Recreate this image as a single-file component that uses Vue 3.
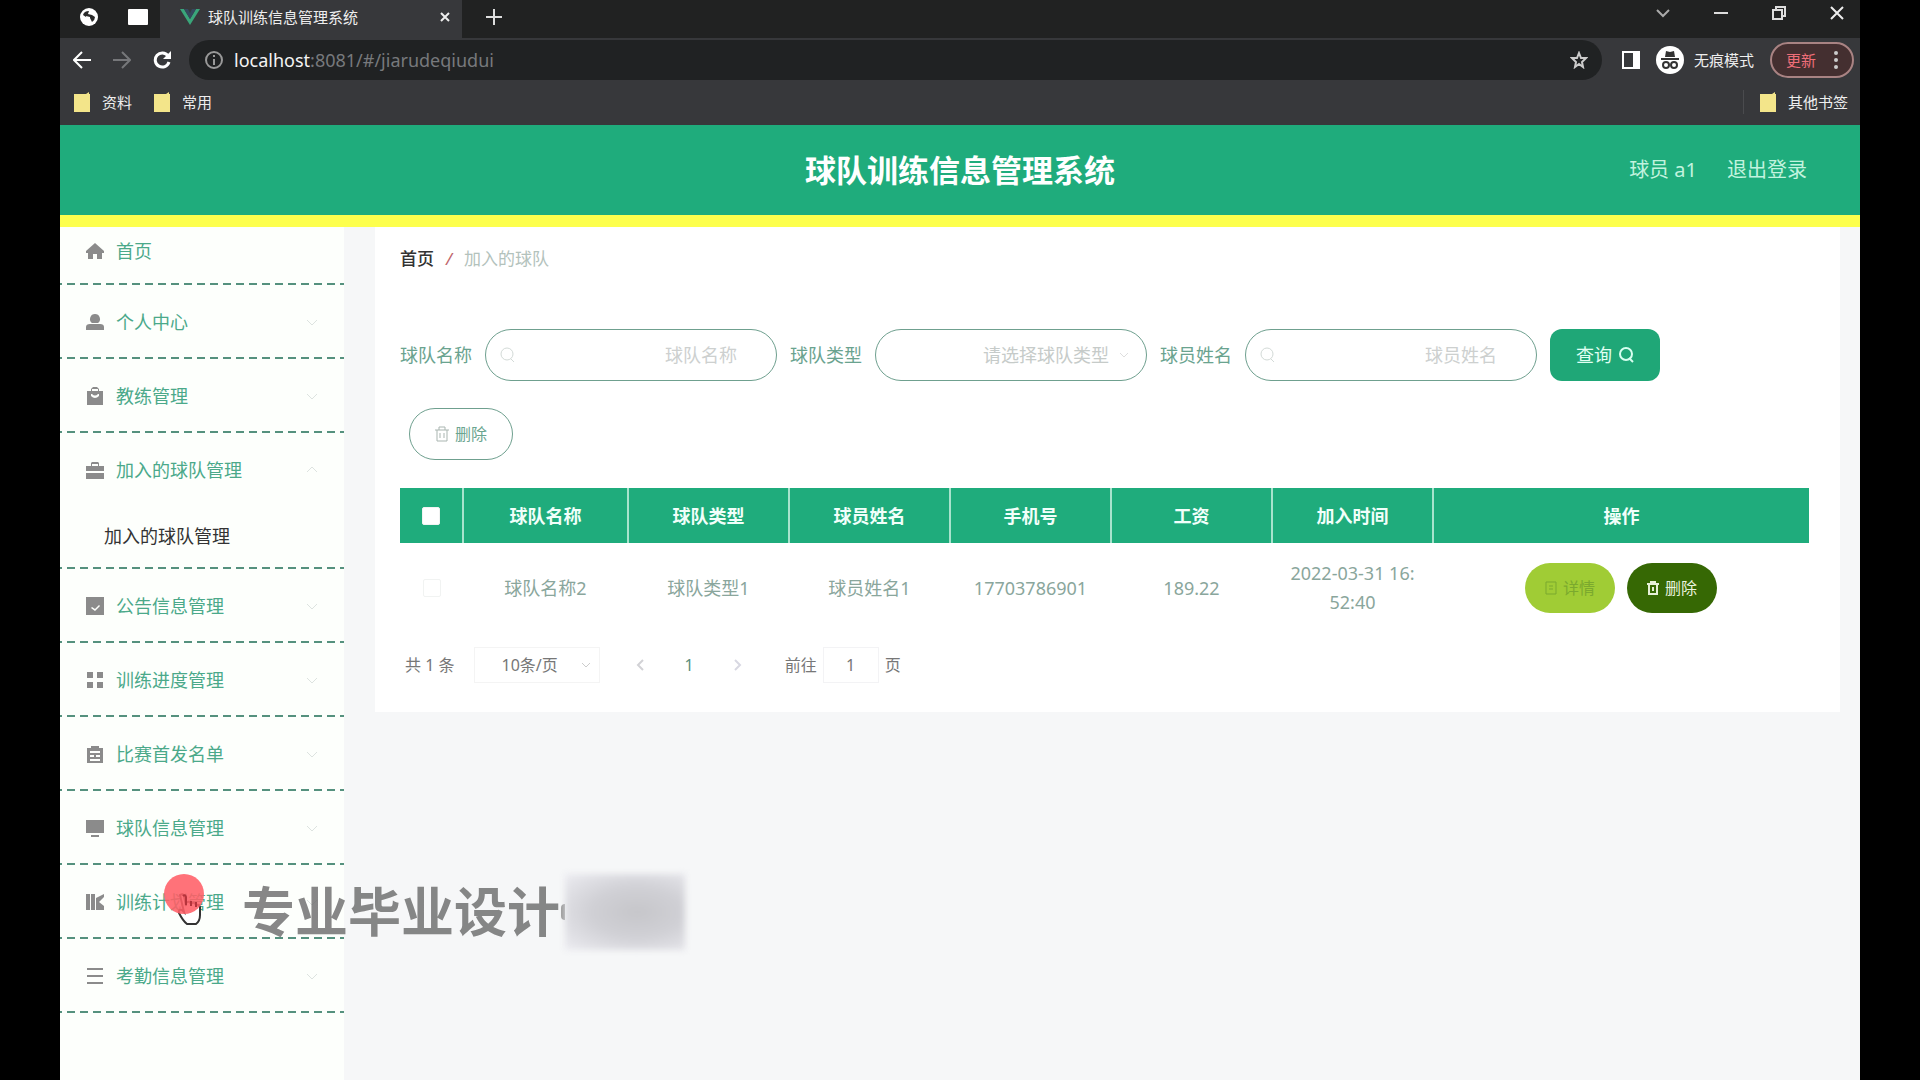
<script setup>
import { ref } from 'vue'

const menus = ref([
  { name: '首页', icon: 'home', leaf: true },
  { name: '个人中心', icon: 'user' },
  { name: '教练管理', icon: 'goods' },
  { name: '加入的球队管理', icon: 'case', open: true, children: ['加入的球队管理'] },
  { name: '公告信息管理', icon: 'claim' },
  { name: '训练进度管理', icon: 'grid' },
  { name: '比赛首发名单', icon: 'list' },
  { name: '球队信息管理', icon: 'monitor' },
  { name: '训练计划管理', icon: 'book' },
  { name: '考勤信息管理', icon: 'lines' }
])

const icons = {
  home: 'M9 1 0 9v2h2v6h5v-5h4v5h5v-6h2V9z',
  user: 'M9 1a5 5 0 0 1 3 9H6a5 5 0 0 1 3-9zM0 17v-3q0-3 4-3h10q4 0 4 3v3z',
  goods: 'M1 4h4V2l2-2h4l2 2v2h4v14H1zM6 4h6V2H6zM5 7v2q4 4 8 0V7h-1q-3 3-6 0z',
  case: 'M0 5h5V2l1-1h6l1 1v3h5v5H0zM6 5h6V3H6zM0 12h18v6H0z',
  claim: 'M0 0h18v18H0zM5 11l4 3 5-5-1-1-4 4-3-2z',
  grid: 'M1 1h6v6H1zM11 1h6v6h-6zM1 11h6v6H1zM11 11h6v6h-6z',
  list: 'M1 3h4V1h8v2h4v15H1zM4 6v2h10V6zM4 10v2h4v-2zM10 10v2h4v-2zM4 14v2h10v-2z',
  monitor: 'M0 1h18v13H0zM5 16h8v2H5z',
  book: 'M0 1h4v16H0zM5 1h4v16H5zM10 5l8-4v3l-5 5 5 4v4h-8z',
  lines: 'M1 1h16v2H1zM1 8h16v2H1zM1 15h16v2H1z'
}

const rows = ref([
  { team: '球队名称2', type: '球队类型1', player: '球员姓名1', phone: '17703786901', pay: '189.22', time: '2022-03-31 16:52:40' }
])

const teamName = ref('')
const teamType = ref('')
const playerName = ref('')
const checkAll = ref(false)
const pageSize = ref('10')
const jump = ref('1')

function toggle(m) {
  if (m.children) m.open = !m.open
}
</script>

<template>
  <div class="screen">
    <div class="browser">
      <div class="tabs">
        <button class="ico" aria-label="固定标签">
          <svg width="18" height="18" viewBox="0 0 18 18"><circle cx="9" cy="9" r="9" fill="#fff" /><path d="M3 7q1-4 6-4l-1 3 4 1 3 2q0 3-3 5l-2-4-4-1z" fill="#2a2a2a" /><path d="M6 8l4 1v3l-3 1z" fill="#fff" /></svg>
        </button>
        <button class="ico" aria-label="窗口">
          <svg width="20" height="16" viewBox="0 0 20 16"><rect width="20" height="16" rx="1" fill="#fff" /></svg>
        </button>
        <div class="tab">
          <svg width="20" height="16" viewBox="0 0 20 16"><path d="M0 0h4l6 10 6-10h4L10 16z" fill="#3aa57a" /><path d="M4 0h4l2 4 2-4h4l-6 10z" fill="#35495e" /></svg>
          <span class="tab-title">球队训练信息管理系统</span>
          <button class="ico" aria-label="关闭标签">
            <svg width="10" height="10" viewBox="0 0 10 10"><path d="m1 1 8 8m0-8-8 8" stroke="#eee" stroke-width="2" /></svg>
          </button>
        </div>
        <button class="ico plus" aria-label="新标签">
          <svg width="16" height="16" viewBox="0 0 16 16"><path d="M8 0v16M0 8h16" stroke="#ddd" stroke-width="2" /></svg>
        </button>
        <div class="win">
          <button class="ico" aria-label="展开"><svg width="14" height="14" viewBox="0 0 14 14"><path d="m1 4 6 6 6-6" fill="none" stroke="#aaa" stroke-width="2" /></svg></button>
          <button class="ico" aria-label="最小化"><svg width="14" height="14" viewBox="0 0 14 14"><path d="M0 7h14" stroke="#ddd" stroke-width="2" /></svg></button>
          <button class="ico" aria-label="还原"><svg width="14" height="14" viewBox="0 0 14 14"><path d="M1 4h9v9H1zM4 4V1h9v9h-3" fill="none" stroke="#ddd" stroke-width="2" /></svg></button>
          <button class="ico" aria-label="关闭"><svg width="14" height="14" viewBox="0 0 14 14"><path d="m1 1 12 12m0-12L1 13" stroke="#eee" stroke-width="2" /></svg></button>
        </div>
      </div>

      <div class="toolbar">
        <button class="ico" aria-label="后退"><svg width="18" height="18" viewBox="0 0 18 18"><path d="M18 9H2m7-8L1 9l8 8" fill="none" stroke="#fff" stroke-width="2" /></svg></button>
        <button class="ico" aria-label="前进"><svg width="18" height="18" viewBox="0 0 18 18"><path d="M0 9h16M9 1l8 8-8 8" fill="none" stroke="#76777a" stroke-width="2" /></svg></button>
        <button class="ico" aria-label="刷新"><svg width="18" height="18" viewBox="0 0 18 18"><path d="M15 5a7 7 0 1 0 1 6" fill="none" stroke="#fff" stroke-width="3" /><path d="M18 0v8h-8z" fill="#fff" /></svg></button>
        <div class="address">
          <svg width="18" height="18" viewBox="0 0 18 18"><circle cx="9" cy="9" r="8" fill="none" stroke="#999" stroke-width="2" /><path d="M9 8v6M9 4v2" stroke="#999" stroke-width="2" /></svg>
          <div class="url" role="textbox" aria-label="地址"><b>localhost</b>:8081/#/jiarudeqiudui</div>
          <button class="ico" aria-label="收藏"><svg width="18" height="18" viewBox="0 0 18 18"><path d="m9 2 2 5h5l-4 4 1 5-4-3-4 3 1-5-4-4h5z" fill="none" stroke="#ccc" stroke-width="2" /></svg></button>
        </div>
        <button class="ico" aria-label="侧边栏"><svg width="18" height="18" viewBox="0 0 18 18"><path d="M1 1h16v16H1z" fill="none" stroke="#fff" stroke-width="2" /><path d="M11 1h6v16h-6z" fill="#fff" /></svg></button>
        <button class="private">
          <svg width="28" height="28" viewBox="0 0 28 28"><circle cx="14" cy="14" r="14" fill="#fff" /><path d="m9 11 1-6 4 1 4-1 1 6zM5 12h18v2H5z" fill="#333" /><circle cx="10" cy="19" r="3" fill="none" stroke="#333" stroke-width="2" /><circle cx="18" cy="19" r="3" fill="none" stroke="#333" stroke-width="2" /></svg>
          无痕模式
        </button>
        <button class="update">更新
          <svg width="4" height="18" viewBox="0 0 4 18"><circle cx="2" cy="2" r="2" fill="#ccc" /><circle cx="2" cy="9" r="2" fill="#ccc" /><circle cx="2" cy="16" r="2" fill="#ccc" /></svg>
        </button>
      </div>

      <div class="bookmarks">
        <a v-for="b in ['资料', '常用', '其他书签']" :key="b" href="#">
          <svg width="16" height="20" viewBox="0 0 16 20"><path d="M0 2h12l3-2v2h1v18H0z" fill="#f3e58a" /></svg>{{ b }}
        </a>
      </div>
    </div>

    <header class="header">
      <h1>球队训练信息管理系统</h1>
      <div class="account">
        <span>球员 a1</span>
        <a href="#">退出登录</a>
      </div>
    </header>

    <div class="body">
      <nav class="sidebar">
        <div v-for="m in menus" :key="m.name" class="group" :class="{ home: m.leaf }">
          <button class="menu" @click="toggle(m)">
            <svg width="18" height="18" viewBox="0 0 18 18"><path :d="icons[m.icon]" fill="#8b8b8b" fill-rule="evenodd" /></svg>
            <span>{{ m.name }}</span>
            <svg v-if="!m.leaf" class="caret" :class="{ up: m.open }" width="12" height="12" viewBox="0 0 12 12"><path d="m1 4 5 5 5-5" fill="none" stroke="#dde3e0" stroke-width="1" /></svg>
          </button>
          <template v-if="m.open">
            <a v-for="c in m.children" :key="c" class="sub" href="#">{{ c }}</a>
          </template>
        </div>
      </nav>

      <main class="main">
        <section class="card">
          <div class="crumb"><a href="#">首页</a><i>/</i><span>加入的球队</span></div>

          <form class="filters" @submit.prevent>
            <label for="team">球队名称</label>
            <div class="field">
              <svg width="16" height="16" viewBox="0 0 16 16"><circle cx="8" cy="7" r="6" fill="none" stroke="#d3dad7" stroke-width="1" /><path d="m12 12 3 3" stroke="#d3dad7" /></svg>
              <input id="team" v-model="teamName" placeholder="球队名称">
            </div>
            <label for="type">球队类型</label>
            <div class="field select">
              <select id="type" v-model="teamType">
                <option value="">请选择球队类型</option>
                <option value="1">球队类型1</option>
              </select>
              <svg width="10" height="10" viewBox="0 0 10 10"><path d="m1 3 4 4 4-4" fill="none" stroke="#dedede" /></svg>
            </div>
            <label for="player">球员姓名</label>
            <div class="field">
              <svg width="16" height="16" viewBox="0 0 16 16"><circle cx="8" cy="7" r="6" fill="none" stroke="#d3dad7" stroke-width="1" /><path d="m12 12 3 3" stroke="#d3dad7" /></svg>
              <input id="player" v-model="playerName" placeholder="球员姓名">
            </div>
            <button class="query">查询
              <svg width="16" height="16" viewBox="0 0 16 16"><circle cx="8" cy="7" r="6" fill="none" stroke="#d8fff0" stroke-width="2" /><path d="m11 11 4 4" stroke="#d8fff0" stroke-width="2" /></svg>
            </button>
          </form>

          <button class="remove">
            <svg width="14" height="16" viewBox="0 0 14 16"><path d="M0 4h14M4 4V1h6v3M2 4v11h10V4M5 7v5M9 7v5" fill="none" stroke="#a9b5b0" /></svg>删除
          </button>

          <table>
            <thead>
              <tr>
                <th class="check"><input v-model="checkAll" type="checkbox" aria-label="全选"></th>
                <th class="first">球队名称</th>
                <th>球队类型</th>
                <th>球员姓名</th>
                <th>手机号</th>
                <th>工资</th>
                <th>加入时间</th>
                <th class="ops">操作</th>
              </tr>
            </thead>
            <tbody>
              <tr v-for="r in rows" :key="r.phone">
                <td><input type="checkbox" aria-label="选择" :checked="checkAll"></td>
                <td>{{ r.team }}</td>
                <td>{{ r.type }}</td>
                <td>{{ r.player }}</td>
                <td>{{ r.phone }}</td>
                <td>{{ r.pay }}</td>
                <td class="time">{{ r.time }}</td>
                <td>
                  <div class="actions">
                    <button class="detail">
                      <svg width="12" height="14" viewBox="0 0 12 14"><path d="M1 1h10v12H1zM4 5h4M4 8h4" fill="none" stroke="#7ba92e" /></svg>详情
                    </button>
                    <button class="del">
                      <svg width="12" height="14" viewBox="0 0 12 14"><path d="M0 3h12M4 3V1h4v2M2 3v10h8V3M6 6v4" fill="none" stroke="#e6f0d8" stroke-width="2" /></svg>删除
                    </button>
                  </div>
                </td>
              </tr>
            </tbody>
          </table>

          <div class="pager">
            <span>共 1 条</span>
            <div class="size">
              <select v-model="pageSize" aria-label="每页条数">
                <option value="10">10条/页</option>
                <option value="20">20条/页</option>
              </select>
              <svg width="10" height="10" viewBox="0 0 10 10"><path d="m1 3 4 4 4-4" fill="none" stroke="#ccc" /></svg>
            </div>
            <button aria-label="上一页"><svg width="10" height="12" viewBox="0 0 10 12"><path d="M8 1 3 6l5 5" fill="none" stroke="#d2d2d6" stroke-width="2" /></svg></button>
            <button class="num">1</button>
            <button aria-label="下一页"><svg width="10" height="12" viewBox="0 0 10 12"><path d="m2 1 5 5-5 5" fill="none" stroke="#d8d8e2" stroke-width="2" /></svg></button>
            <label class="jump">前往<input v-model="jump">页</label>
          </div>
        </section>
      </main>
    </div>

    <div class="watermark">专业毕业设计<span class="dot"></span><span class="patch"></span></div>
    <svg class="pointer" width="44" height="56" viewBox="0 0 44 56">
      <path d="M17 21q3-2 4 1l2 10v-3q3-3 5 1 3-3 5 1 3-1 4 2v8q0 6-4 9h-9q-4-3-8-11-1-4 3-3l2 2z" fill="#fff" stroke="#333" stroke-width="2" />
      <circle cx="21" cy="20" r="20" fill="#ff5f66" fill-opacity=".88" />
      <path d="M20 22q2-2 3 1v8m5-4v5m5-4v5" fill="none" stroke="#b5343c" stroke-width="2" />
    </svg>
  </div>
</template>

<style>
body {
  margin: 0;
  background: #000;
}
</style>

<style scoped>
.screen {
  position: relative;
  min-height: 100vh;
  padding: 0 60px;
  box-sizing: border-box;
  display: flex;
  flex-direction: column;
  overflow: hidden;
  background: #000;
  font-family: "Noto Sans", "Noto Sans CJK SC", sans-serif;
  font-size: 18px;
  line-height: 24px;
}
.screen * { box-sizing: border-box; }
button, input, select {
  font: inherit;
  color: inherit;
  background: none;
  border: none;
  padding: 0;
  margin: 0;
  outline: none;
}
button { cursor: pointer; }
select { appearance: none; }
a { color: inherit; text-decoration: none; }
svg { display: block; flex: none; }

/* browser */
.browser {
  background: #37383b;
  color: #eee;
  font-size: 15px;
}
.tabs {
  display: flex;
  align-items: center;
  height: 38px;
  padding: 0 16px 4px 20px;
  background: #212222;
}
.tabs > .ico + .ico { margin-left: 30px; }
.tab {
  display: flex;
  align-items: center;
  align-self: stretch;
  width: 302px;
  margin: 0 24px -4px 12px;
  padding: 0 12px 4px 20px;
  background: #37383b;
}
.tab-title { flex: 1; padding-left: 8px; }
.win {
  display: flex;
  gap: 44px;
  margin-left: auto;
  padding-bottom: 8px;
}
.toolbar {
  display: flex;
  align-items: center;
  height: 44px;
  padding: 0 6px 0 13px;
}
.toolbar > .ico { margin-right: 22px; }
.address {
  flex: 1;
  display: flex;
  align-items: center;
  height: 40px;
  margin: 0 20px 0 -4px;
  padding: 0 14px 0 16px;
  border-radius: 20px;
  background: #202223;
}
.url {
  flex: 1;
  padding-left: 11px;
  color: #77797c;
  font-size: 18px;
}
.url b { font-weight: 400; color: #f4f4f4; }
.toolbar > .address + .ico { margin-right: 16px; }
.private {
  display: flex;
  align-items: center;
  gap: 10px;
  margin-right: 16px;
}
.update {
  display: flex;
  align-items: center;
  gap: 18px;
  height: 36px;
  padding: 0 14px;
  border: 2px solid #a98383;
  border-radius: 18px;
  background: #442f30;
  color: #ee6e78;
}
.bookmarks {
  display: flex;
  align-items: center;
  gap: 22px;
  height: 43px;
  padding: 0 12px 3px 14px;
}
.bookmarks a {
  display: flex;
  align-items: center;
  gap: 12px;
}
.bookmarks a:last-child {
  margin-left: auto;
  padding-left: 16px;
  border-left: 1px solid #4a4b4e;
}

/* header */
.header {
  display: grid;
  grid-template-columns: 1fr auto 1fr;
  align-items: center;
  height: 102px;
  padding: 0 53px;
  border-bottom: 12px solid #fdff4d;
  background: #1fac7c;
  color: #fff;
}
.header h1 {
  grid-column: 2;
  margin: 0;
  font-size: 31px;
  line-height: 40px;
}
.account {
  display: flex;
  justify-content: flex-end;
  gap: 30px;
  font-size: 20px;
  color: #c2f3df;
}

/* sidebar */
.body {
  flex: 1;
  display: flex;
  background: #f6f7f8;
}
.sidebar {
  flex: none;
  width: 284px;
  background: #fdfffc;
}
.group {
  padding-bottom: 2px;
  background: linear-gradient(90deg, #55917e 8px, transparent 8px) 7px 100% / 13px 2px repeat-x;
}
.menu {
  display: flex;
  align-items: center;
  width: 100%;
  height: 72px;
  padding: 2px 26px 0;
  color: #4ba98a;
  text-align: left;
}
.home .menu {
  height: 56px;
  padding-bottom: 10px;
}
.menu span { flex: 1; padding-left: 12px; }
.caret.up { transform: rotate(180deg); }
.sub {
  display: block;
  height: 62px;
  padding: 19px 44px 0;
  color: #333;
}

/* content */
.main {
  flex: 1;
  min-width: 0;
  padding: 0 20px 0 31px;
}
.card {
  padding: 20px 31px 29px 25px;
  background: #fff;
}
.crumb {
  display: flex;
  gap: 12px;
  font-size: 17px;
  color: #b3c2bc;
}
.crumb a { font-weight: 500; color: #333; }
.crumb i { color: #c0656c; }
.filters {
  display: flex;
  flex-wrap: wrap;
  align-items: center;
  gap: 13px;
  margin-top: 58px;
  color: #6aa38f;
}
.field {
  display: flex;
  align-items: center;
  width: 292px;
  height: 52px;
  padding: 0 39px 0 13px;
  border: 1px solid #6fa08f;
  border-radius: 26px;
}
.field input, .field select {
  flex: 1;
  min-width: 0;
  text-align: right;
}
.field.select {
  width: 272px;
  padding-right: 17px;
}
.field select { padding-right: 10px; text-align-last: right; color: #c6cbc9; }
.field input::placeholder { color: #cdd0cf; }
.query {
  display: flex;
  align-items: center;
  gap: 6px;
  height: 52px;
  padding: 0 26px;
  border-radius: 12px;
  background: #1fa777;
  color: #e0fff3;
}
.remove {
  display: flex;
  align-items: center;
  gap: 6px;
  height: 52px;
  margin: 27px 9px 28px;
  padding: 0 25px;
  border: 1px solid #6fa08f;
  border-radius: 26px;
  color: #6ba590;
  font-size: 16px;
}
table {
  width: 100%;
  table-layout: fixed;
  border-collapse: collapse;
  text-align: center;
  color: #8aa69c;
}
th {
  width: 161px;
  height: 55px;
  padding: 0;
  background: #1fac7c;
  color: #f1fffa;
}
th + th { border-left: 2px solid #a8e3cd; }
.check { width: 63px; }
.first { width: 165px; }
.ops { width: auto; }
td { height: 89px; padding: 0 14px; }
.time { line-height: 29px; word-break: break-all; }
table input {
  appearance: none;
  display: block;
  width: 18px;
  height: 18px;
  margin: 0 auto;
  border: 1px solid #f1f3f2;
  border-radius: 2px;
  background: #fff;
}
.actions {
  display: flex;
  justify-content: center;
  gap: 12px;
}
.actions button {
  display: flex;
  align-items: center;
  gap: 6px;
  height: 50px;
  padding: 0 20px;
  border-radius: 25px;
  font-size: 16px;
}
.detail { background: #a0cc35; color: #7ba92e; }
.del { background: #366804; color: #eaf3df; }
.pager {
  display: flex;
  align-items: center;
  height: 36px;
  margin-top: 15px;
  padding-left: 5px;
  font-size: 16px;
  color: #777;
}
.size {
  display: flex;
  align-items: center;
  width: 126px;
  height: 36px;
  margin: 0 31px 0 20px;
  padding: 0 8px 0 26px;
  border: 1px solid #f4f4f4;
}
.size select { flex: 1; min-width: 0; }
.pager button { padding: 0 4px; }
.pager .num { margin: 0 31px; color: #5b8f7e; }
.jump {
  display: flex;
  align-items: center;
  margin-left: 38px;
}
.jump input {
  width: 56px;
  height: 36px;
  margin: 0 6px;
  border: 1px solid #f3f3f5;
  text-align: center;
}

/* overlays */
.watermark {
  position: absolute;
  left: 242px;
  top: 874px;
  display: flex;
  align-items: center;
  height: 76px;
  font-size: 53px;
  line-height: 82px;
  font-weight: 700;
  color: rgba(105, 105, 105, .8);
  white-space: nowrap;
  pointer-events: none;
}
.dot {
  width: 4px;
  height: 16px;
  margin-left: 1px;
  border-radius: 4px 0 0 4px;
  background: #999;
}
.patch {
  width: 120px;
  height: 76px;
  background: radial-gradient(ellipse at 60% 50%, #c6c6ca 0, #d0d0d5 45%, #ececf1 100%);
  filter: blur(3px);
}
.pointer {
  position: absolute;
  left: 163px;
  top: 874px;
  pointer-events: none;
}
</style>
